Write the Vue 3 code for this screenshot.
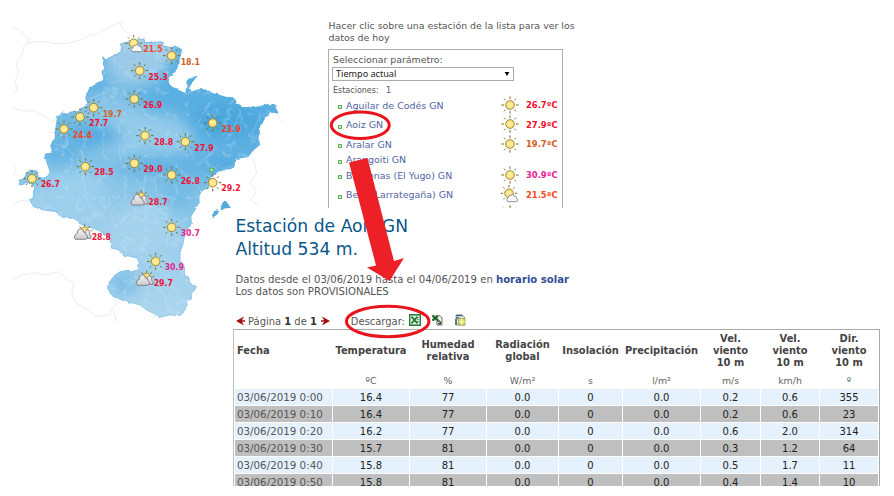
<script setup>
const outline = 'M308 140L318 150 332 138 350 133 362 125 366 112 360 103 375 97 390 95 420 88 435 86 432 97 455 97 490 95 488 107 510 112 525 108 545 118 542 135 535 160 530 180 510 200 505 215 515 230 535 240 557 250 560 230 562 210 575 203 592 198 580 212 566 235 575 245 600 237 620 240 640 250 680 262 700 262 712 280 730 292 760 292 775 290 800 283 828 285 832 310 810 307 795 325 780 350 775 385 780 405 760 420 745 440 705 447 702 472 690 477 665 478 640 495 630 505 625 535 600 542 597 565 598 575 585 600 572 620 575 640 555 665 550 695 540 730 540 750 550 770 552 795 565 800 570 820 590 830 575 855 565 875 555 900 540 917 510 915 485 922 460 910 440 900 420 885 395 878 365 870 340 860 322 840 325 820 345 795 360 785 385 780 395 785 410 780 418 760 412 745 395 740 370 735 355 720 335 715 330 690 305 665 280 655 262 650 235 640 220 625 190 623 165 605 130 600 100 590 90 570 100 565 100 545 105 530 85 520 60 525 58 510 75 500 88 480 110 482 115 500 130 505 150 490 145 470 135 440 135 432 158 428 152 405 165 385 165 370 172 320 185 308 200 312 230 305 260 285 257 262 268 235 300 215 312 205 305 185 315 175 308 160Z'
const neighbours = [
  'M40 52L62 62 70 75 90 87 80 100 120 93 165 101 205 100 240 90 270 75 300 70 325 52 362 38 362 50 385 72 400 90',
  'M90 87L72 110 65 135 48 160 55 190 45 215 52 240 40 250',
  'M40 293L70 303 105 302 135 320 168 336',
  'M832 310L835 325 848 335',
  'M760 445L770 490 750 520 770 545 752 570 775 585',
  'M40 580L65 572 95 575', 'M40 465L48 480 40 500',
  'M40 810L65 795 110 788 135 795 180 785 200 810 222 820 215 850 230 880 265 900 290 920 325 915 345 885 360 875M340 900L350 935',
]
const stations = [
  [404, 102, '21.5', '#f4431f', 'mix', 430, 127], [515, 137, '18.1', '#c9641f', 'sun', 542, 164],
  [419, 182, '25.3', '#ee1133', 'sun', 445, 209], [403, 267, '26.9', '#ee1133', 'sun', 429, 293],
  [281, 293, '19.7', '#cf6420', 'sun', 308, 320], [240, 321, '27.7', '#ee1133', 'sun', 267, 347],
  [192, 357, '24.4', '#f4431f', 'sun', 218, 383], [638, 339, '23.9', '#f4431f', 'sun', 664, 365],
  [435, 377, '28.8', '#ee1133', 'sun', 462, 404], [556, 395, '27.9', '#ee1133', 'sun', 583, 422],
  [256, 470, '28.5', '#ee1133', 'sun', 283, 496], [403, 460, '29.0', '#ee1133', 'sun', 430, 486],
  [96, 506, '26.7', '#ee1133', 'sun', 122, 532], [515, 495, '26.8', '#ee1133', 'sun', 542, 522],
  [638, 518, '29.2', '#ee1133', 'sun', 664, 544], [418, 568, '28.7', '#ee1133', 'cloud', 445, 586],
  [248, 671, '28.8', '#ee1133', 'cloud', 275, 689], [515, 652, '30.7', '#df2a8b', 'sun', 542, 679],
  [467, 754, '30.9', '#df2a8b', 'sun', 494, 781], [434, 809, '29.7', '#ee1133', 'cloud', 461, 827],
]
const list = [
  { name: 'Aguilar de Codés GN', t: '26.7ºC', c: 'red', icon: 'sun' },
  { name: 'Aoiz GN', t: '27.9ºC', c: 'red', icon: 'sun' },
  { name: 'Aralar GN', t: '19.7ºC', c: 'brown', icon: 'sun' },
  { name: 'Arangoiti GN', short: true },
  { name: 'Bardenas (El Yugo) GN', t: '30.9ºC', c: 'pink', icon: 'sun' },
  { name: 'Bera (Larrategaña) GN', t: '21.5ºC', c: 'orange', icon: 'mix' },
]
const heads = ['Fecha', 'Temperatura', 'Humedad\nrelativa', 'Radiación\nglobal', 'Insolación', 'Precipitación', 'Vel.\nviento\n10 m', 'Vel.\nviento\n10 m', 'Dir.\nviento\n10 m']
const units = ['', 'ºC', '%', 'W/m²', 's', 'l/m²', 'm/s', 'km/h', 'º']
const rows = [
  ['03/06/2019 0:00', '16.4', '77', '0.0', '0', '0.0', '0.2', '0.6', '355'],
  ['03/06/2019 0:10', '16.4', '77', '0.0', '0', '0.0', '0.2', '0.6', '23'],
  ['03/06/2019 0:20', '16.2', '77', '0.0', '0', '0.0', '0.6', '2.0', '314'],
  ['03/06/2019 0:30', '15.7', '81', '0.0', '0', '0.0', '0.3', '1.2', '64'],
  ['03/06/2019 0:40', '15.8', '81', '0.0', '0', '0.0', '0.5', '1.7', '11'],
  ['03/06/2019 0:50', '15.8', '81', '0.0', '0', '0.0', '0.4', '1.4', '10'],
]
</script>

<template>
  <main class="page">
    <svg class="map" width="290" height="330" viewBox="0 -30 870 990">
      <defs>
        <linearGradient id="land" x1="0.75" y1="0" x2="0.4" y2="1">
          <stop offset="0" stop-color="#56aee1" /><stop offset=".3" stop-color="#5cb0e2" />
          <stop offset=".5" stop-color="#7cbfe6" /><stop offset=".7" stop-color="#9bceec" /><stop offset="1" stop-color="#b0d7ee" />
        </linearGradient>
        <filter id="soft" x="-50%" y="-50%" width="200%" height="200%" color-interpolation-filters="sRGB"><feGaussianBlur stdDeviation="22" /></filter>
        <filter id="relief" x="0" y="0" width="100%" height="100%" color-interpolation-filters="sRGB">
          <feTurbulence type="turbulence" baseFrequency="0.016" numOctaves="4" seed="8" />
          <feColorMatrix values="0 0 0 0 .82  0 0 0 0 .92  0 0 0 0 .98  -5 0 0 0 1.1" />
        </filter>
        <filter id="jag" color-interpolation-filters="sRGB"><feTurbulence type="fractalNoise" baseFrequency="0.07" numOctaves="2" seed="3" /><feDisplacementMap in="SourceGraphic" scale="9" xChannelSelector="R" yChannelSelector="G" /></filter>
        <clipPath id="area"><path :d="outline" /></clipPath>
        <linearGradient id="cloudFill" x1="0" y1="0" x2="0" y2="1"><stop offset="0" stop-color="#f4f4f4" /><stop offset="1" stop-color="#cacace" /></linearGradient>
        <radialGradient id="sunFill"><stop offset="0" stop-color="#fff0a8" /><stop offset="1" stop-color="#fddf70" /></radialGradient>
        <symbol id="sun" viewBox="-30 -30 60 60">
          <path d="M0-26V-18M0 26V18M-26 0H-18M26 0H18M-18-19L-13-14M18-19L13-14M-18 19L-13 14M18 19L13 14" stroke="#786f24" stroke-width="3" fill="none" />
          <circle r="13" fill="url(#sunFill)" stroke="#8f7a30" stroke-width="2.6" />
        </symbol>
        <symbol id="mix" viewBox="-30 -30 60 60">
          <g transform="translate(-3 -2)">
            <path d="M0-25V-18M-25 0H-18M25 0H18M-17-18L-13-14M17-18L13-14M-17 18L-13 14" stroke="#786f24" stroke-width="3" fill="none" />
            <circle r="13" fill="url(#sunFill)" stroke="#8f7a30" stroke-width="2.6" />
          </g>
          <path d="M-7 23Q-15 17-6 11Q-5 3 3 4Q8-2 13 6Q20 6 20 13Q28 18 20 23Z" fill="#f7f7f9" stroke="#77747b" stroke-width="2.4" />
        </symbol>
        <symbol id="cloud" viewBox="-30 -30 60 60">
          <path d="M6-28V-21M-9-22L-5-17M21-22L17-17M-12-11H-8M29-9H24" stroke="#786f24" stroke-width="3" />
          <circle cx="6" cy="-9" r="11" fill="#fddf70" stroke="#8f7a30" stroke-width="2" />
          <path d="M2 14Q-3 1 7-2Q8-14 18-10Q24-5 20 1Q28 5 25 14Z" fill="url(#cloudFill)" stroke="#77747b" stroke-width="2.4" />
          <path d="M-22 17Q-29 11-22 3Q-20-1-16-1Q-16-17-4-14Q3-12 2-5Q10-5 10 3Q17 5 14 13Q13 17 7 17Z" fill="url(#cloudFill)" stroke="#77747b" stroke-width="2.6" />
        </symbol>
      </defs>
      <path v-for="(d, i) in neighbours" :key="'n' + i" :d="d" fill="none" stroke="#e9e9e9" stroke-width="2.5" />
      <g filter="url(#jag)">
        <path :d="outline" fill="url(#land)" />
        <path d="M636 624L642 603 655 600 650 613 643 618ZM661 597L668 577 678 573 693 593Z" fill="#55a9da" />
        <g clip-path="url(#area)">
          <g filter="url(#soft)">
            <ellipse cx="420" cy="110" rx="110" ry="70" fill="#a9d0e8" /><ellipse cx="400" cy="165" rx="90" ry="70" fill="#9acae8" />
            <ellipse cx="325" cy="300" rx="100" ry="55" fill="#8ac4e7" /><ellipse cx="430" cy="380" rx="150" ry="75" fill="#94cbea" />
            <ellipse cx="680" cy="330" rx="100" ry="45" fill="#48a5dd" /><ellipse cx="290" cy="375" rx="75" ry="22" fill="#45a2db" />
            <ellipse cx="180" cy="420" rx="65" ry="50" fill="#64b3e2" /><ellipse cx="480" cy="465" rx="130" ry="28" fill="#5fb0e1" />
            <ellipse cx="530" cy="555" rx="40" ry="40" fill="#6fb8e3" /><ellipse cx="220" cy="540" rx="95" ry="60" fill="#9bcfec" />
            <ellipse cx="370" cy="820" rx="50" ry="38" fill="#7cbee5" /><ellipse cx="80" cy="510" rx="30" ry="25" fill="#62b2e1" />
            <ellipse cx="660" cy="465" rx="60" ry="20" fill="#4aa5dd" /><ellipse cx="430" cy="660" rx="100" ry="80" fill="#a5d2ed" />
          </g>
          <rect x="50" y="80" width="800" height="850" filter="url(#relief)" opacity=".36" />
          <path d="M160 400Q240 420 250 500T280 620M290 490Q340 570 335 610T400 700 470 780M360 400Q350 460 390 490T460 620M570 390Q560 430 600 470M640 270Q610 300 595 340M720 300Q710 350 680 390M400 150L370 210 330 220M470 120Q480 170 510 205M355 220Q330 250 270 265M810 300Q750 340 755 400" fill="none" stroke="#c9e3f3" stroke-width="3" opacity=".3" />
        </g>
        <path :d="outline" fill="none" stroke="#49a3d8" stroke-width="2.5" opacity=".55" />
      </g>
      <rect x="630" y="475" width="10" height="9" fill="#c8f0b8" stroke="#4eb84c" stroke-width="3" />
      <g v-for="s in stations" :key="s[0] + '-' + s[1]">
        <use :href="'#' + s[4]" :x="s[0] - 30" :y="s[1] - 30" width="60" height="60" />
        <text :x="s[5]" :y="s[6]" :fill="s[3]" class="value" textLength="58" lengthAdjust="spacingAndGlyphs">{{ s[2] }}</text>
      </g>
    </svg>

    <section class="picker">
      <p class="hint">Hacer clic sobre una estación de la lista para ver los<br>datos de hoy</p>
      <div class="box">
        <div class="label">Seleccionar parámetro:</div>
        <div class="select"><span>Tiempo actual</span><svg width="6" height="6" viewBox="0 0 6 6"><path d="M.6 1H5.4L3 5Z" /></svg></div>
        <div class="count">Estaciones:<a>1</a></div>
        <div v-for="r in list" :key="r.name" class="station" :class="{ short: r.short }">
          <i class="dot"></i>
          <span class="name">{{ r.name }}</span>
          <svg v-if="r.icon" class="weather" width="20" height="20"><use :href="'#' + r.icon" width="20" height="20" /></svg>
          <b v-if="r.t" :class="r.c">{{ r.t }}</b>
        </div>
        <div class="station"><i class="dot hidden"></i><span class="name"></span><svg class="weather" width="20" height="20"><use href="#sun" width="20" height="20" /></svg></div>
      </div>
    </section>

    <section class="report">
      <h1>Estación de Aoiz GN<br>Altitud 534 m.</h1>
      <p class="info">Datos desde el 03/06/2019 hasta el 04/06/2019 en <b>horario solar</b><br>Los datos son PROVISIONALES</p>
      <div class="toolbar">
        <svg width="9" height="10" viewBox="0 0 9 10"><path d="M0 5L8 .5 6 4.2H9V5.8H6L8 9.5Z" fill="#a50f12" /></svg>
        <span class="pager">Página <b>1</b> de <b>1</b></span>
        <svg width="9" height="10" viewBox="0 0 9 10"><path d="M9 5L1 .5 3 4.2H0V5.8H3L1 9.5Z" fill="#a50f12" /></svg>
        <span class="download">Descargar:</span>
        <svg class="xls" width="12" height="12" viewBox="0 0 12 12"><path d="M.7.7H11.3V11.3H.7Z" fill="#e5f1e2" stroke="#287b36" stroke-width="1.4" /><path d="M8 3.500H10M8 5.500H10M8 7.500H10" stroke="#72a978" /><path d="M2.500 2.700L8.500 9.300M8.500 2.700L2.500 9.300" stroke="#237c35" stroke-width="1.8" /></svg>
        <svg class="csv" width="11" height="12" viewBox="0 0 11 12"><path d="M3.500 1.500H8L10 4V11H5V7" fill="#f6f6e9" stroke="#5a6058" stroke-width=".9" /><path d="M0 1H7V7H0Z" fill="#b9d5b7" /><path d="M.5 1.500L6 6.500M6 1.500L.5 6.500" stroke="#1d5a29" stroke-width="1.7" /><path d="M5 7H8V9.500M6 9L8 10.500 9 8" stroke="#222" fill="none" /></svg>
        <svg class="doc" width="11" height="12" viewBox="0 0 11 12"><path d="M1 1H7L9.500 3V11H1Z" fill="#dfe5df" stroke="#8b9490" stroke-width=".9" /><path d="M1 1.500H7.500M1 4H4" stroke="#4c667b" stroke-width="1.300" /><path d="M3.500 4.500H10V11H3.500Z" fill="#d7df55" stroke="#8e9c4a" stroke-width=".8" /><path d="M3.500 7.700H10M6.700 4.500V11" stroke="#fffde0" /><path d="M1 5V11" stroke="#344c60" stroke-width="1.300" /></svg>
      </div>
      <div class="table">
        <div class="grid head"><div v-for="(h, i) in heads" :key="i">{{ h }}</div></div>
        <div class="grid units"><div v-for="(u, i) in units" :key="i">{{ u }}</div></div>
        <div v-for="r in rows" :key="r[0]" class="grid data"><div v-for="(c, i) in r" :key="i">{{ c }}</div></div>
      </div>
    </section>

    <svg class="marks" width="894" height="496" viewBox="0 0 894 496">
      <g fill="none" stroke="#e8141e" stroke-width="3"><ellipse cx="360.3" cy="125.3" rx="29" ry="13.2" /><ellipse cx="387.7" cy="321.5" rx="41.3" ry="15.2" /></g>
      <path d="M349 162.5L367.5 158 394 261 404 258 389.5 281 367 267.5 376 265.5Z" fill="#ee2027" />
    </svg>
  </main>
</template>

<style>
body { margin: 0; background: #fff; }
</style>
<style scoped>
.page { position: relative; width: 894px; height: 496px; overflow: hidden; display: grid; grid-template-columns: 233px 661px; grid-template-rows: 208px 278px; font-family: "DejaVu Sans", Verdana, sans-serif; color: #555; background: #fff; }
.map { grid-column: 1; grid-row: 1 / 3; overflow: visible; display: block; }
.value { font: bold 24px "DejaVu Sans", Verdana, sans-serif; }
p, h1 { margin: 0; font-weight: normal; }
.picker { grid-column: 2; grid-row: 1; width: 250px; margin-left: 95px; padding-top: 20px; height: 188px; overflow: hidden; }
.hint { font-size: 9.42px; line-height: 12px; height: 29px; white-space: nowrap; padding-left: .5px; }
.box { width: 230px; height: 170px; border: 1px solid #a9b3a5; padding: 4px 0 0 3px; }
.label { font-size: 9.4px; line-height: 11px; height: 13px; padding-left: 1px; }
.select { box-sizing: content-box; width: 174px; height: 12px; border: 1px solid #aaa; color: #222; font: 9.1px/12px "Noto Sans", sans-serif; display: flex; align-items: center; justify-content: space-between; padding: 0 3px; }
.count { font-size: 8px; line-height: 18px; height: 14.5px; padding-left: 1px; }
.count a { color: #4c5fa0; font-size: 8.8px; margin-left: 7px; }
.station { display: flex; align-items: center; height: 19.5px; white-space: nowrap; }
.station.short { height: 11.5px; }
.dot { box-sizing: border-box; width: 4px; height: 4px; margin: 4px 4px 0 6px; border: 1px solid #64b45a; background: #c8edbb; }
.dot.hidden { visibility: hidden; }
.name { width: 154px; font-size: 9.45px; color: #53659f; }
.weather { width: 20px; height: 20px; flex: none; overflow: visible; position: relative; top: -.5px; }
.station b { margin-left: 6px; font-size: 8.4px; }
.red { color: #f20d2b; } .brown { color: #d45d1c; } .pink { color: #e42291; } .orange { color: #f5461c; }
.report { grid-column: 2; grid-row: 2; height: 278px; overflow: hidden; }
h1 { box-sizing: border-box; color: #095689; font-size: 17.2px; line-height: 23.4px; padding: 7px 0 0 2.5px; height: 66px; white-space: nowrap; }
.info { font-size: 10.1px; line-height: 12px; height: 39px; padding-left: 2.5px; white-space: nowrap; }
.info b { color: #354e94; }
.toolbar { display: flex; align-items: center; height: 16px; padding: 0 0 0 3px; font-size: 9.95px; white-space: nowrap; }
.toolbar b { color: #333; }
.pager { margin: 0 4px 0 3px; }
.download { margin-left: 21px; }
.xls { margin-left: 4px; margin-top: -2px; } .csv { margin-left: 11px; margin-top: -2px; } .doc { margin-left: 12px; margin-top: -2px; }
.table { width: 643px; height: 170px; padding: 0 1px; border: 1px solid #a9aaa4; border-left: 1px solid #bfc4bb; border-bottom: 0; }
.grid { display: grid; grid-template-columns: 97px 76px 76px 71px 63px 77px 59px 58px 58px; column-gap: 1px; text-align: center; white-space: pre; }
.grid > div:first-child { text-align: left; padding-left: 2px; }
.head { height: 42px; align-items: center; font-weight: bold; line-height: 12px; color: #444; font-size: 9.9px; }
.units { height: 17px; line-height: 18px; color: #666; font-size: 9.4px; }
.data { height: 17px; line-height: 17px; color: #222; font-size: 10px; }
.data > div { background: #e6f1fe; height: 16px; }
.data:nth-child(even) > div { background: #bfbfbf; }
.data > div:first-child { color: #555; font-size: 10.3px; }
.marks { position: absolute; left: 0; top: 0; pointer-events: none; }
</style>
